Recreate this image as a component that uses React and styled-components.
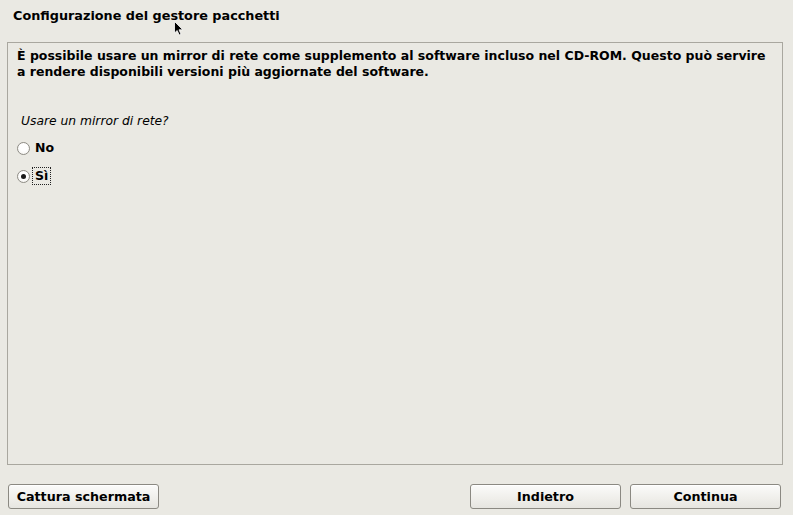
import React from "react";
import styled, { createGlobalStyle } from "styled-components";

const Global = createGlobalStyle`
  html, body { margin: 0; padding: 0; background: #eae9e3; }
  body { font-family: "DejaVu Sans", "Liberation Sans", sans-serif; font-size: 13px; color: #000; }
`;

const Screen = styled.div`
  position: relative;
  width: 793px;
  height: 515px;
  background: #eae9e3;
  display: flex;
  flex-direction: column;
  overflow: hidden;
`;

const Title = styled.div`
  height: 42px;
  padding: 8px 0 0 13px;
  box-sizing: border-box;
  line-height: 16px;
  font-size: 12.8px;
  font-weight: bold;
`;

const Panel = styled.div`
  flex: 1;
  margin: 0 10px 0 7px;
  border: 1px solid #a9a79f;
  padding: 5px 9px 0 9px;
  display: flex;
  flex-direction: column;
`;

const Intro = styled.p`
  margin: 0;
  font-weight: bold;
  font-size: 12.5px;
  line-height: 16px;
  white-space: nowrap;
`;

const Question = styled.div`
  margin: 33px 0 0 4px;
  font-style: italic;
  font-size: 12.3px;
  line-height: 16px;
`;

const Options = styled.div`
  display: flex;
  flex-direction: column;
  gap: 10px;
  margin-top: 10px;
`;

const Option = styled.label`
  display: flex;
  align-items: center;
  height: 18px;
  font-weight: bold;
  font-size: 12.5px;
  gap: 4px;
`;

const Radio = styled.span`
  width: 11px;
  height: 11px;
  border-radius: 50%;
  border: 1px solid #8e8c85;
  background: radial-gradient(circle at 50% 40%, #ffffff 40%, #f1f0ec 100%);
  display: flex;
  align-items: center;
  justify-content: center;
  margin-right: 1px;
  &::after {
    content: "";
    width: 5px;
    height: 5px;
    border-radius: 50%;
    background: #1a1a1a;
    display: ${(p) => (p.$checked ? "block" : "none")};
  }
`;

const OptionText = styled.span`
  padding: 1px 2px;
  margin-left: -3px;
  border: 1px ${(p) => (p.$focus ? "dotted #222" : "solid transparent")};
  line-height: 14px;
`;

const Footer = styled.div`
  height: 50px;
  box-sizing: border-box;
  padding: 19px 12px 0 8px;
  display: flex;
  align-items: flex-start;
  gap: 9px;
`;

const Button = styled.button`
  width: 151px;
  height: 25px;
  border: 1px solid #8b8982;
  border-radius: 3px;
  background: linear-gradient(#fbfbfa, #efeeea 60%, #e6e5e0);
  font-family: "DejaVu Sans", "Liberation Sans", sans-serif;
  font-size: 12.7px;
  font-weight: bold;
  color: #000;
  padding: 0;
  box-shadow: inset 0 1px 0 #fff;
  margin-left: ${(p) => (p.$push ? "auto" : "0")};
`;

const Cursor = styled.svg`
  position: absolute;
  left: 174px;
  top: 21px;
  pointer-events: none;
`;

export default function App() {
  return (
    <>
      <Global />
      <Screen>
        <Title>Configurazione del gestore pacchetti</Title>
        <Panel>
          <Intro>
            È possibile usare un mirror di rete come supplemento al software incluso nel CD-ROM. Questo può servire
            <br />a rendere disponibili versioni più aggiornate del software.
          </Intro>
          <Question>Usare un mirror di rete?</Question>
          <Options>
            <Option>
              <Radio />
              <OptionText>No</OptionText>
            </Option>
            <Option>
              <Radio $checked />
              <OptionText $focus>Sì</OptionText>
            </Option>
          </Options>
        </Panel>
        <Footer>
          <Button>Cattura schermata</Button>
          <Button $push>Indietro</Button>
          <Button>Continua</Button>
        </Footer>
        <Cursor width="10" height="16" viewBox="0 0 10 16">
          <path d="M0.5 0.5 L0.5 12 L3.2 9.5 L5.2 14 L7 13.2 L5 8.8 L8.8 8.8 Z" fill="#000" stroke="#fff" strokeWidth="0.8" />
        </Cursor>
      </Screen>
    </>
  );
}
